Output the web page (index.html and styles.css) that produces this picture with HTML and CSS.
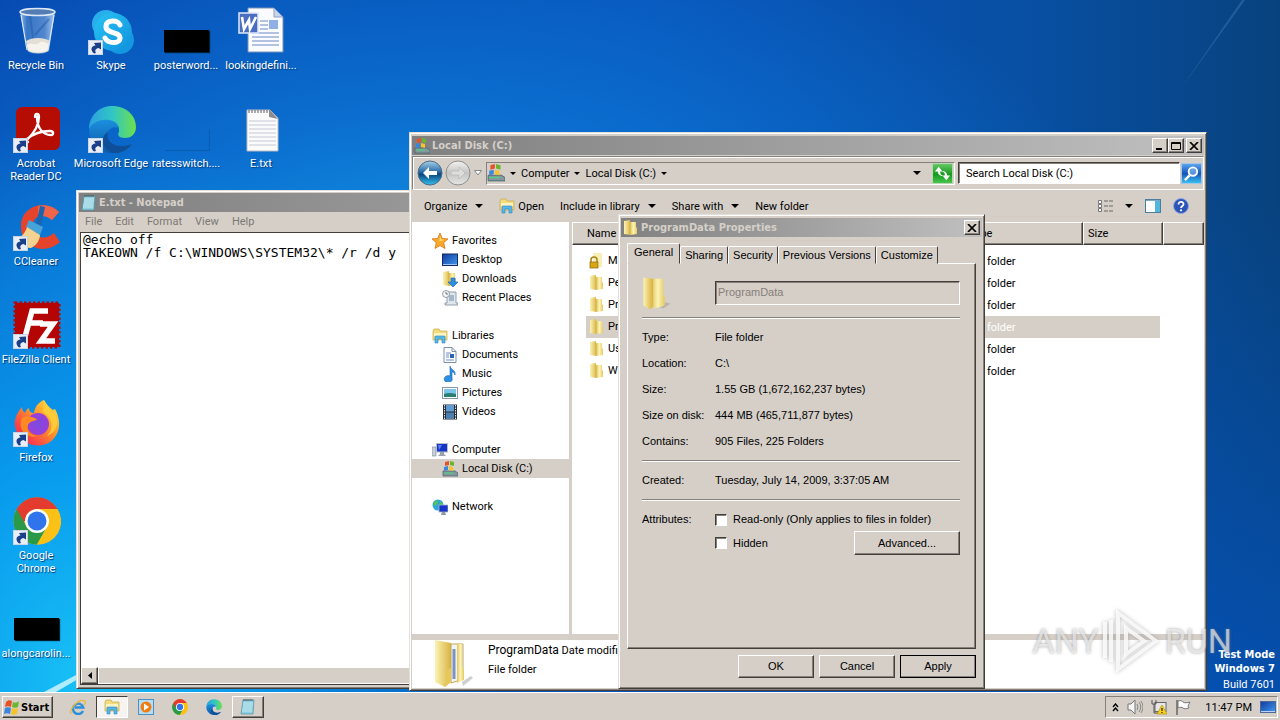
FILE: index.html
```html
<!DOCTYPE html>
<html lang="en">
<head>
<meta charset="utf-8">
<title>Desktop</title>
<link rel="stylesheet" href="styles.css">
</head>
<body>
<svg class="defs" aria-hidden="true">
  <defs>
    <linearGradient id="g-fold" x1="0" x2="1"><stop offset="0" stop-color="#fbf3b4"/><stop offset="1" stop-color="#d9b340"/></linearGradient>
    <linearGradient id="g-fold2" x1="0" x2="1"><stop offset="0" stop-color="#e3c356"/><stop offset=".5" stop-color="#fbf4b8"/><stop offset="1" stop-color="#e6c95c"/></linearGradient>
    <linearGradient id="g-edge" x1="0" x2="1"><stop offset="0" stop-color="#2a9fe0"/><stop offset=".5" stop-color="#31c6c4"/><stop offset="1" stop-color="#6de04a"/></linearGradient>
    <linearGradient id="g-edge2" x1="0" x2="0" y1="0" y2="1"><stop offset="0" stop-color="#1b8fdf"/><stop offset="1" stop-color="#0c59a4"/></linearGradient>
    <linearGradient id="g-sky" x1="0" y1="0" x2="1" y2="1"><stop offset="0" stop-color="#28c4f4"/><stop offset="1" stop-color="#1090dc"/></linearGradient>
    <linearGradient id="g-fox" x1="1" y1="0" x2="0" y2="1"><stop offset="0" stop-color="#fff04a"/><stop offset=".4" stop-color="#ff9a28"/><stop offset=".75" stop-color="#fb4348"/><stop offset="1" stop-color="#e0207c"/></linearGradient>
    <radialGradient id="g-purple"><stop offset="0" stop-color="#7a4be0"/><stop offset="1" stop-color="#9a3fd8"/></radialGradient>
    <linearGradient id="g-bin" x1="0" x2="1"><stop offset="0" stop-color="#b9d0ee"/><stop offset=".2" stop-color="#3f7cc8"/><stop offset=".7" stop-color="#5d90d2"/><stop offset="1" stop-color="#c7daf2"/></linearGradient>
    <linearGradient id="g-back" x1="0" x2="0" y1="0" y2="1"><stop offset="0" stop-color="#a8cfe8"/><stop offset=".45" stop-color="#2a6ea8"/><stop offset=".55" stop-color="#0a4780"/><stop offset="1" stop-color="#35c0ee"/></linearGradient>
    <linearGradient id="g-fwd" x1="0" x2="0" y1="0" y2="1"><stop offset="0" stop-color="#f2f2f0"/><stop offset=".5" stop-color="#c4c4c2"/><stop offset="1" stop-color="#e6e6e4"/></linearGradient>
    <linearGradient id="g-screen" x1="0" y1="0" x2="1" y2="1"><stop offset="0" stop-color="#123a9c"/><stop offset="1" stop-color="#3f9af0"/></linearGradient>
  </defs>

  <symbol id="i-shortcut" viewBox="0 0 15 15"><rect x=".5" y=".5" width="14" height="14" fill="#e9eef6" stroke="#c9d4e6"/><path d="M6 13.500C2 10 3 6 7.500 5.500L6 3l7-.5V9.500L10.500 8C7.500 8.500 6.500 10.500 8 13z" fill="#1b4089"/></symbol>

  <symbol id="i-bin" viewBox="0 0 48 48"><path d="M7 4h35l-6 40c-5 4-17 4-22 0z" fill="url(#g-bin)" opacity=".85"/><path d="M13 34c6-4 18-4 24 0l-2 10c-5 3-15 3-20 0z" fill="#e3dfd6"/><path d="M14 38c5-3 9 1 12-2s7 0 10 1l-1 6c-5 3-15 3-20 0z" fill="#f6f3ec"/><path d="M17 9l3 22M36 12L22 28" stroke="#215ba8" stroke-width="2" fill="none" opacity=".5"/><ellipse cx="24.500" cy="5" rx="17.500" ry="3.500" fill="#547db3" stroke="#dce8f6" stroke-width="1.500"/><path d="M8 8l6 35M41 8l-6 35" stroke="#d8e7f8" stroke-width="1.200"/></symbol>

  <symbol id="i-skype" viewBox="0 0 48 48"><circle cx="18" cy="17" r="14" fill="#28aeea"/><circle cx="32" cy="33" r="14" fill="#1496e0"/><circle cx="25" cy="25" r="19" fill="url(#g-sky)"/><path d="M32 18c-2-5-13-6-14 1-1 8 14 5 14 12 0 6-12 6-15 0" fill="none" stroke="#fff" stroke-width="5" stroke-linecap="round"/></symbol>

  <symbol id="i-word" viewBox="0 0 48 48"><path d="M10 1h26l9 9v35H10z" fill="#fafcff" stroke="#7b91b8"/><path d="M36 1v9h9z" fill="#c7d5ec" stroke="#8ba0c5"/><path d="M14 30h27M14 34h27M14 38h27M22 14h8M22 18h8M22 22h8M14 26h27" stroke="#6c87c4" stroke-width="1.200"/><rect x="31" y="13" width="9" height="9" fill="#8fb0e6"/><rect x="1" y="6" width="19" height="20" fill="#4a6fc0" stroke="#dfe8fa" stroke-width="1.500"/><path d="M4 10l2 12 5-9 1 9 6-12" fill="none" stroke="#fff" stroke-width="2.600"/></symbol>

  <symbol id="i-text" viewBox="0 0 48 48"><path d="M9 5h23l8 8v33H9z" fill="#fbfbfb" stroke="#b8bcc4"/><path d="M31 4l9 10-9-2z" fill="#8c8c8c"/><path d="M11 16h27M11 20h27M11 24h27M11 28h27M11 32h27M11 36h27M11 40h27" stroke="#c3c8d4"/><path d="M11 5v3M14 5v3M17 5v3M20 5v3M23 5v3M26 5v3M29 5v3" stroke="#777" stroke-width="1.200"/></symbol>

  <symbol id="i-acro" viewBox="0 0 48 48"><rect x="3" y="2" width="44" height="43" rx="6" fill="#b50d04"/><path d="M22 12c0-4 4-4 4 0 0 9-7 18-12 23M24 12c0 11 6 18 14 18 3 0 3-4-1-4-9 0-17 3-23 8-3 3-2 5 1 3" fill="none" stroke="#fff" stroke-width="2.300" stroke-linecap="round"/></symbol>

  <symbol id="i-edge" viewBox="0 0 48 48"><path d="M1 24C1 11 11 1 24 1c15 0 24 10 24 21 0 8-6 11-11 11-6 0-8-3-6-6C33 16 16 10 1 24z" fill="url(#g-edge)"/><path d="M1 24c5-11 27-13 30-1-7-3-13 3-12 9 1 9 14 14 27 6C40 46 32 49 24 48 10 47 1 36 1 24z" fill="url(#g-edge2)"/><path d="M20 27c-3 10 8 18 24 12-5 6-11 9-19 9-12-4-13-17-5-21z" fill="#0f4f98"/></symbol>

  <symbol id="i-cc" viewBox="0 0 48 48"><path d="M46 9C32-4 9 3 8 22c-1 21 22 32 39 17l-6-9c-9 8-21 5-21-7 0-11 11-14 19-6z" fill="#e5432c"/><path d="M46 9l-7 8c-5-4-10-5-14-2V3c8-2 15 0 21 6z" fill="#f0654a"/><path d="M27 3l5 1-4 19-5-1z" fill="#1c64ac"/><path d="M16 17l14 7-3 8-14-8z" fill="#45a3da"/><path d="M14 24l13 8c0 5-4 11-9 13C9 45 3 41 1 37c6-2 11-6 13-13z" fill="#f4d28f"/></symbol>

  <symbol id="i-fz" viewBox="0 0 48 48"><rect x="2" y="2" width="44" height="44" fill="#b40404" stroke="#b40404" stroke-width="3" stroke-dasharray="2.500 2"/><path d="M12 36L19 10h16M16 22h14M27 23h13L28 40h14" fill="none" stroke="#fff" stroke-width="5.500"/></symbol>

  <symbol id="i-fox" viewBox="0 0 48 48"><path d="M31 1c2 4 6 8 9 10l2-1c5 9 6 20 0 28-8 12-28 11-36-1C-1 27 1 17 9 8c0 3 1 4 3 6 1-3 2-4 4-5 0 3 2 5 5 5 1-7 5-11 10-13z" fill="url(#g-fox)"/><circle cx="25" cy="25" r="11" fill="url(#g-purple)"/><path d="M9 19c6-3 10-1 15 1-2 3-7 1-9 6-2 6 3 10 9 11-9 3-20-5-15-18z" fill="#ff8a24"/><path d="M30 13c10 5 11 17 4 24 9-3 13-13 8-22-4-3-8-8-11-14z" fill="#ffd13c" opacity=".8"/></symbol>

  <symbol id="i-chrome" viewBox="0 0 48 48"><circle cx="24" cy="24" r="23.500" fill="#fbc116"/><path d="M24 24H4L3.700 12A23.500 23.500 0 0 1 44.400 12H24z" fill="#e33b2e"/><path d="M3.700 12A23.500 23.500 0 0 0 24 47.500L34 30 14 30z" fill="#2a9a48"/><path d="M24 12h20.400A23 23 0 0 1 24 47.500L34 30z" fill="#fbc116"/><circle cx="24" cy="24" r="12" fill="#fff"/><circle cx="24" cy="24" r="9.500" fill="#2f74ea"/></symbol>

  <symbol id="i-flag" viewBox="0 0 16 16"><path d="M2 3c2-2 4-2 6-1L7 8C5 7 3 7 1 8z" fill="#e8502a"/><path d="M9 3c2 1 4 1 6-1l-1 6c-2 1-4 1-6 0z" fill="#6bb62f"/><path d="M1 9c2-1 4-1 6 0l-1 6c-2-1-4-1-6 0z" fill="#3a86dc"/><path d="M8 9c2 1 4 1 6 0l-1 6c-2 1-4 1-6 0z" fill="#f7c32b"/></symbol>

  <symbol id="i-disk" viewBox="0 0 16 16"><path d="M1 10h12l3 2v3H1z" fill="#8399a0" stroke="#4f646b" stroke-width=".8"/><path d="M2 12h9" stroke="#47d878"/><path d="M3 1l4-1v4l-4 1z" fill="#e8502a"/><path d="M8 0l4 1v4L8 4z" fill="#6bb62f"/><path d="M2 6l4-1v4L2 10z" fill="#3a86dc"/><path d="M7 5l4 1v4L7 9z" fill="#f7c32b"/></symbol>

  <symbol id="i-folder" viewBox="0 0 16 16"><path d="M1 1l6-1 1 15-7-1z" fill="url(#g-fold)"/><path d="M7 2h6v5l1 1v6l-7 1z" fill="url(#g-fold2)"/><path d="M7 2v13" stroke="#caa33a" stroke-width=".6"/></symbol>

  <symbol id="i-lockfolder" viewBox="0 0 16 16"><path d="M4 0h9v14H4z" fill="#f7efb9"/><path d="M2 9V7a3 3 0 0 1 6 0v2" fill="none" stroke="#a88417" stroke-width="1.500"/><rect x="1" y="9" width="8" height="6" fill="#d9a514" stroke="#8a6710" stroke-width=".7"/></symbol>

  <symbol id="i-bigfolder" viewBox="0 0 48 48"><path d="M25 44l9-7 6 2-10 7z" fill="#999" opacity=".5"/><path d="M2 2l13 2v40l-4 3-9-5z" fill="url(#g-fold)"/><path d="M15 4h15v22l2 4v12l-15 4-4-8z" fill="url(#g-fold2)"/><path d="M15 4v38" stroke="#d0aa3e"/></symbol>

  <symbol id="i-fullfolder" viewBox="0 0 48 48"><path d="M30 42l9-6 2 2-10 8z" fill="#888" opacity=".4"/><path d="M3 0l16 3v39l-6 5-10-5z" fill="url(#g-fold)"/><path d="M19 4h12v35l-12 4z" fill="#f0f3f8" stroke="#c2a85b"/><path d="M22 9v30" stroke="#7a93c4" stroke-width="3"/><path d="M25 4h5v22l2 3v11l-7 3z" fill="url(#g-fold2)"/><path d="M12 47l3-17 4-2v14z" fill="#e6c75a"/></symbol>

  <symbol id="i-lib" viewBox="0 0 16 16"><path d="M1 3l1-2h5l1 2h7v9H1z" fill="#f3dc7e" stroke="#c9a646" stroke-width=".7"/><path d="M2 5h12v3H2z" fill="#fbf4c0"/><path d="M3 15V9q0-1 1-1h8q1 0 1 1v6h-3v-4H6v4z" fill="#57b6e8" stroke="#2c86bd" stroke-width=".6"/></symbol>

  <symbol id="i-star" viewBox="0 0 16 16"><path d="M8 0l2.300 5.400 5.700.5-4.300 3.800L13 15.500l-5-3-5 3 1.300-5.800L0 5.900l5.700-.5z" fill="#f9a928" stroke="#d9731a" stroke-width=".8"/><path d="M8 3l1.400 3.500 3 .4-5 1z" fill="#ffe08a"/></symbol>
  <symbol id="i-desk" viewBox="0 0 16 16"><rect x=".5" y="2" width="15" height="11.500" fill="url(#g-screen)" stroke="#102a66"/><path d="M1 12.500h14" stroke="#9fc4f0"/></symbol>
  <symbol id="i-down" viewBox="0 0 16 16"><use href="#i-folder"/><path d="M9 7h4v4h3l-5 5-5-5h3z" fill="#2c8fe6" stroke="#1462ae" stroke-width=".6"/></symbol>
  <symbol id="i-recent" viewBox="0 0 16 16"><path d="M5 2h9v11h2v2H3v-2h2z" fill="#dfe6ec" stroke="#7c8b98" stroke-width=".8"/><path d="M7 6h5M7 8h5M7 10h5" stroke="#6e87a6"/><circle cx="4" cy="4" r="3.500" fill="#f3f5f7" stroke="#7c8b98" stroke-width=".8"/><path d="M4 2v2h2" stroke="#555" fill="none" stroke-width=".8"/></symbol>
  <symbol id="i-doc" viewBox="0 0 16 16"><path d="M2 .5h8l4 4v11H2z" fill="#fff" stroke="#7d8fa8"/><path d="M10 .5v4h4" fill="none" stroke="#7d8fa8"/><path d="M4 6h5M4 8h3M4 10h3M4 13h8" stroke="#6b8fcc"/><rect x="8" y="7" width="4" height="4" fill="#2c64b4"/></symbol>
  <symbol id="i-music" viewBox="0 0 16 16"><path d="M8 0c1 4 6 4 5 9-1-3-2-3-3-3v6a4 3.500 0 1 1-2-2z" fill="#2f8fe4" stroke="#1766b0" stroke-width=".6"/></symbol>
  <symbol id="i-pic" viewBox="0 0 16 16"><rect x=".5" y="2.500" width="15" height="11" fill="#fff" stroke="#8a97a5"/><rect x="2" y="4" width="12" height="8" fill="#7cc3ee"/><path d="M2 9q5-2 12 0v3H2z" fill="#2a7f72"/></symbol>
  <symbol id="i-vid" viewBox="0 0 16 16"><rect x="1" y=".5" width="14" height="15" fill="#2a2f36"/><path d="M2.500 1v14M13.500 1v14" stroke="#dfe5ea" stroke-dasharray="1.500 1"/><rect x="4" y="1" width="8" height="6.500" fill="#5f9cd4"/><rect x="4" y="8.500" width="8" height="6.500" fill="#4c7fae"/></symbol>
  <symbol id="i-comp" viewBox="0 0 16 16"><path d="M0 5h4v9H0z" fill="#c8ced8" stroke="#7b8695" stroke-width=".6"/><rect x="4.500" y="1.500" width="11" height="8.500" fill="#1734c8" stroke="#b8c0cc"/><path d="M6 3l4 0-3 5z" fill="#5b86f0"/><path d="M8 10h4v2l2 2H6l2-2z" fill="#9aa2ad"/></symbol>
  <symbol id="i-net" viewBox="0 0 16 16"><circle cx="6" cy="6" r="5.500" fill="#2fa6d8"/><path d="M2 3c4-3 5 0 3 2S1 8 2 3zM8 2l3 3-3 2z" fill="#56c452"/><rect x="7" y="6" width="9" height="7" fill="#1734c8" stroke="#a9b4c4" stroke-width=".8"/><path d="M10 13h3l1 3H9z" fill="#8e98a6"/></symbol>
  <symbol id="i-note" viewBox="0 0 16 16"><path d="M3 1h11l-1 14H1z" fill="#8fd0e0" stroke="#4d8ea2" stroke-width=".7"/><path d="M3 4h10M3 6h10M3 8h9M2 10h10M2 12h10" stroke="#d3eef4" stroke-width=".8"/><path d="M4 0v2M6 0v2M8 0v2M10 0v2M12 0v2" stroke="#4a5256" stroke-width=".9"/></symbol>
  <symbol id="i-ie" viewBox="0 0 16 16"><path d="M13 12a5.200 5.200 0 1 1 .3-3.500H5" fill="none" stroke="#2c8fdc" stroke-width="2.400"/><path d="M1 15C-1 10 9-1 15 2c1 1 0 3-1 4" fill="none" stroke="#e9b93a" stroke-width="1.300"/></symbol>
  <symbol id="i-wmp" viewBox="0 0 16 16"><rect x=".5" y=".5" width="15" height="15" fill="#b7dcf6" stroke="#4d90c8"/><circle cx="8" cy="8" r="5.500" fill="#f07d12"/><path d="M6 4.500l5 3.500-5 3.500z" fill="#fff"/></symbol>
  <symbol id="i-views" viewBox="0 0 16 16"><path d="M1.500 2.500h3v3h-3zM1.500 6.500h3v3h-3zM1.500 10.500h3v3h-3z" fill="#fff" stroke="#777"/><path d="M7 3h4M12 3h4M7 8h4M12 8h4M7 13h4M12 13h4" stroke="#666"/></symbol>
  <symbol id="i-pane" viewBox="0 0 16 16"><rect x=".5" y="1.500" width="15" height="13" fill="#fff" stroke="#4d7ea0"/><path d="M1 2.500h14" stroke="#7fa8c4"/><rect x="10" y="3" width="5" height="11" fill="#4fb8dc"/></symbol>
  <symbol id="i-help" viewBox="0 0 16 16"><circle cx="8" cy="8" r="7.500" fill="#2c55b8" stroke="#8fa8dc"/><path d="M5.500 6.500c0-4 5.500-3 5 0C10.300 8 8 8 8 10" fill="none" stroke="#fff" stroke-width="1.800"/><circle cx="8" cy="12.300" r="1.100" fill="#fff"/></symbol>
  <symbol id="i-caret" viewBox="0 0 8 4"><path d="M0 0h8L4 4z" fill="currentColor"/></symbol>
  <symbol id="i-x" viewBox="0 0 10 8"><path d="M1 0l8 8M9 0L1 8" stroke="#000" stroke-width="1.700"/></symbol>
</svg>

<div class="screen">
  <main class="desktop">
    <svg class="beams" viewBox="0 0 1280 692" preserveAspectRatio="none" aria-hidden="true">
      <path d="M44 692L78 674v5L56 692z" fill="#d8f8ff" opacity=".8"/>
      <path d="M1245 0L1180 90 1242 0z" fill="#6fa8e0" opacity=".25"/>
    </svg>

    <div class="icons">
      <div class="icon-col">
        <div class="shortcut"><svg class="pic"><use href="#i-bin"/></svg><span>Recycle Bin</span></div>
        <div class="shortcut"><svg class="pic"><use href="#i-acro"/></svg><svg class="arrow"><use href="#i-shortcut"/></svg><span>Acrobat<br>Reader DC</span></div>
        <div class="shortcut"><svg class="pic"><use href="#i-cc"/></svg><svg class="arrow"><use href="#i-shortcut"/></svg><span>CCleaner</span></div>
        <div class="shortcut"><svg class="pic"><use href="#i-fz"/></svg><svg class="arrow"><use href="#i-shortcut"/></svg><span>FileZilla Client</span></div>
        <div class="shortcut"><svg class="pic"><use href="#i-fox"/></svg><svg class="arrow"><use href="#i-shortcut"/></svg><span>Firefox</span></div>
        <div class="shortcut"><svg class="pic"><use href="#i-chrome"/></svg><svg class="arrow"><use href="#i-shortcut"/></svg><span>Google<br>Chrome</span></div>
        <div class="shortcut"><div class="thumb"></div><span>alongcarolin...</span></div>
      </div>
      <div class="icon-col">
        <div class="shortcut"><svg class="pic"><use href="#i-skype"/></svg><svg class="arrow"><use href="#i-shortcut"/></svg><span>Skype</span></div>
        <div class="shortcut"><svg class="pic"><use href="#i-edge"/></svg><svg class="arrow"><use href="#i-shortcut"/></svg><span>Microsoft Edge</span></div>
      </div>
      <div class="icon-col">
        <div class="shortcut"><div class="thumb"></div><span>posterword...</span></div>
        <div class="shortcut"><div class="thumb thumb-clear"></div><span>ratesswitch....</span></div>
      </div>
      <div class="icon-col">
        <div class="shortcut"><svg class="pic"><use href="#i-word"/></svg><span>lookingdefini...</span></div>
        <div class="shortcut"><svg class="pic"><use href="#i-text"/></svg><span>E.txt</span></div>
      </div>
    </div>

    <div class="build"><strong>Test Mode</strong><strong>Windows 7</strong><span>Build 7601</span></div>

    <section class="window notepad" aria-label="E.txt - Notepad">
      <header class="title"><svg class="ico"><use href="#i-note"/></svg><h2>E.txt - Notepad</h2></header>
      <nav class="menu"><button>File</button><button>Edit</button><button>Format</button><button>View</button><button>Help</button></nav>
      <div class="editor">
        <textarea aria-label="Text" spellcheck="false" wrap="off">@echo off
TAKEOWN /f C:\WINDOWS\SYSTEM32\* /r /d y</textarea>
        <div class="hscroll"><button aria-label="Scroll left"><svg viewBox="0 0 4 7"><path d="M4 0v7L0 3.500z"/></svg></button><div class="thumb-bar"></div></div>
      </div>
    </section>

    <section class="window explorer" aria-label="Local Disk (C:)">
      <header class="title"><svg class="ico"><use href="#i-disk"/></svg><h2>Local Disk (C:)</h2>
        <div class="caption">
          <button aria-label="Minimize"><svg viewBox="0 0 10 8"><path d="M1 7h6" stroke="#000" stroke-width="2"/></svg></button>
          <button aria-label="Maximize"><svg viewBox="0 0 10 8"><path d="M.5.500h9v7h-9zM1 1.500h8" fill="none" stroke="#000"/></svg></button>
          <button class="close" aria-label="Close"><svg><use href="#i-x"/></svg></button>
        </div>
      </header>
      <div class="address">
        <button class="round" aria-label="Back"><svg viewBox="0 0 26 26"><circle cx="13" cy="13" r="12" fill="url(#g-back)" stroke="#4c6a86"/><path d="M6 13l6-6v4h8v4h-8v4z" fill="#fff"/></svg></button>
        <button class="round" aria-label="Forward"><svg viewBox="0 0 26 26"><circle cx="13" cy="13" r="12" fill="url(#g-fwd)" stroke="#8e8e8c"/><path d="M20 13l-6-6v4H6v4h8v4z" fill="#dededc" stroke="#b8b8b6" stroke-width=".7"/></svg></button>
        <button class="recent" aria-label="Recent pages"><svg viewBox="0 0 8 6"><path d="M.5.500h7L4 5z" fill="#fff" stroke="#888"/></svg></button>
        <div class="crumbs">
          <svg class="disk"><use href="#i-disk"/></svg>
          <svg class="caret"><use href="#i-caret"/></svg><button>Computer</button>
          <svg class="caret"><use href="#i-caret"/></svg><button>Local Disk (C:)</button>
          <svg class="caret"><use href="#i-caret"/></svg>
          <svg class="caret big end"><use href="#i-caret"/></svg>
          <button class="refresh" aria-label="Refresh"><svg viewBox="0 0 20 20"><path d="M2 8l4-5 4 5H7.500q0 4 4 5-6 0-6.500-5zM18 12l-4 5-4-5h2.500q0-4-4-5 6 0 6.500 5z" fill="#fff"/></svg></button>
        </div>
        <input class="search" type="text" aria-label="Search" value="Search Local Disk (C:)">
        <button class="go" aria-label="Search"><svg viewBox="0 0 20 20"><circle cx="11.500" cy="8" r="4.500" fill="#9cd0ff" fill-opacity=".5" stroke="#fff" stroke-width="2"/><path d="M8 12l-5 5" stroke="#fff" stroke-width="2.500"/></svg></button>
      </div>
      <div class="toolbar">
        <button>Organize <svg class="caret big"><use href="#i-caret"/></svg></button>
        <button class="open"><svg class="ico"><use href="#i-lib"/></svg>Open</button>
        <button>Include in library <svg class="caret big"><use href="#i-caret"/></svg></button>
        <button>Share with <svg class="caret big"><use href="#i-caret"/></svg></button>
        <button>New folder</button>
        <div class="tools">
          <button aria-label="Change view"><svg class="ico"><use href="#i-views"/></svg></button>
          <button aria-label="View options"><svg class="caret big"><use href="#i-caret"/></svg></button>
          <button aria-label="Preview pane"><svg class="ico"><use href="#i-pane"/></svg></button>
          <button aria-label="Help"><svg class="ico"><use href="#i-help"/></svg></button>
        </div>
      </div>
      <div class="body">
        <nav class="tree">
          <ul>
            <li><svg class="ico"><use href="#i-star"/></svg>Favorites</li>
            <li class="sub"><svg class="ico"><use href="#i-desk"/></svg>Desktop</li>
            <li class="sub"><svg class="ico"><use href="#i-down"/></svg>Downloads</li>
            <li class="sub"><svg class="ico"><use href="#i-recent"/></svg>Recent Places</li>
          </ul>
          <ul>
            <li><svg class="ico"><use href="#i-lib"/></svg>Libraries</li>
            <li class="sub"><svg class="ico"><use href="#i-doc"/></svg>Documents</li>
            <li class="sub"><svg class="ico"><use href="#i-music"/></svg>Music</li>
            <li class="sub"><svg class="ico"><use href="#i-pic"/></svg>Pictures</li>
            <li class="sub"><svg class="ico"><use href="#i-vid"/></svg>Videos</li>
          </ul>
          <ul>
            <li><svg class="ico"><use href="#i-comp"/></svg>Computer</li>
            <li class="sub current"><svg class="ico"><use href="#i-disk"/></svg>Local Disk (C:)</li>
          </ul>
          <ul>
            <li><svg class="ico"><use href="#i-net"/></svg>Network</li>
          </ul>
        </nav>
        <div class="files">
          <table>
            <colgroup><col><col class="c-type"><col class="c-size"><col class="c-rest"></colgroup>
            <thead><tr><th>Name</th><th>Type</th><th>Size</th><th></th></tr></thead>
            <tbody>
              <tr><td><svg class="ico"><use href="#i-lockfolder"/></svg>MSOCache</td><td>File folder</td><td></td><td></td></tr>
              <tr><td><svg class="ico"><use href="#i-folder"/></svg>PerfLogs</td><td>File folder</td><td></td><td></td></tr>
              <tr><td><svg class="ico"><use href="#i-folder"/></svg>Program Files</td><td>File folder</td><td></td><td></td></tr>
              <tr class="picked"><td><svg class="ico"><use href="#i-folder"/></svg>ProgramData</td><td>File folder</td><td></td><td></td></tr>
              <tr><td><svg class="ico"><use href="#i-folder"/></svg>Users</td><td>File folder</td><td></td><td></td></tr>
              <tr><td><svg class="ico"><use href="#i-folder"/></svg>Windows</td><td>File folder</td><td></td><td></td></tr>
            </tbody>
          </table>
        </div>
      </div>
      <footer class="details">
        <svg class="pic"><use href="#i-fullfolder"/></svg>
        <div><p><span class="name">ProgramData</span> Date modified:</p><p>File folder</p></div>
      </footer>
    </section>

    <section class="window dialog" role="dialog" aria-label="ProgramData Properties">
      <header class="title"><svg class="ico"><use href="#i-folder"/></svg><h2>ProgramData Properties</h2>
        <div class="caption"><button class="close" aria-label="Close"><svg><use href="#i-x"/></svg></button></div>
      </header>
      <div class="sheet">
        <div class="tabs" role="tablist">
          <button role="tab" aria-selected="true" class="on">General</button><button role="tab">Sharing</button><button role="tab">Security</button><button role="tab">Previous Versions</button><button role="tab">Customize</button>
        </div>
        <div class="panel">
          <div class="row head"><svg class="bigico"><use href="#i-bigfolder"/></svg><input type="text" aria-label="Name" value="ProgramData" disabled></div>
          <hr>
          <dl>
            <dt>Type:</dt><dd>File folder</dd>
            <dt>Location:</dt><dd>C:\</dd>
            <dt>Size:</dt><dd>1.55 GB (1,672,162,237 bytes)</dd>
            <dt>Size on disk:</dt><dd>444 MB (465,711,877 bytes)</dd>
            <dt>Contains:</dt><dd>905 Files, 225 Folders</dd>
          </dl>
          <hr>
          <dl><dt>Created:</dt><dd>Tuesday, July 14, 2009, 3:37:05 AM</dd></dl>
          <hr>
          <div class="row attrs">
            <span>Attributes:</span>
            <div class="checks">
              <div><input type="checkbox" id="ro"><label for="ro">Read-only (Only applies to files in folder)</label></div>
              <div><input type="checkbox" id="hid"><label for="hid">Hidden</label><button class="btn adv">Advanced...</button></div>
            </div>
          </div>
        </div>
        <div class="actions"><button class="btn">OK</button><button class="btn">Cancel</button><button class="btn default">Apply</button></div>
      </div>
    </section>

    <div class="watermark"><span>ANY</span><svg viewBox="0 0 60 66"><path d="M9 12v42M3 14v36M16 5l38 28-38 28zM24 20l18 13-18 13z" fill="none"/></svg><span>RUN</span></div>
  </main>

  <footer class="taskbar">
    <button class="start"><svg class="ico"><use href="#i-flag"/></svg>Start</button>
    <div class="tasks">
      <button aria-label="Internet Explorer"><svg><use href="#i-ie"/></svg></button>
      <button class="pressed" aria-label="Windows Explorer"><svg><use href="#i-lib"/></svg></button>
      <button aria-label="Media Player"><svg><use href="#i-wmp"/></svg></button>
      <button aria-label="Chrome"><svg><use href="#i-chrome"/></svg></button>
      <button aria-label="Edge"><svg><use href="#i-edge"/></svg></button>
      <button class="raised" aria-label="Notepad"><svg><use href="#i-note"/></svg></button>
    </div>
    <div class="tray">
      <button aria-label="Show hidden icons"><svg class="chev" viewBox="0 0 7 9"><path d="M1 4l2.500-3L6 4M1 8l2.500-3L6 8" fill="none" stroke="#000" stroke-width="1.400"/></svg></button>
      <svg class="ico" viewBox="0 0 16 16"><path d="M1 5h3l4-4v14l-4-4H1z" fill="#f6f6f6" stroke="#777"/><path d="M10 5q2 3 0 6M12 3q3.500 5 0 10M14 2q4 6 0 12" fill="none" stroke="#888"/></svg>
      <svg class="ico" viewBox="0 0 16 16"><rect x="4" y="3.500" width="11" height="9" fill="#e6e6e6" stroke="#666"/><path d="M1 1v4h4V1M3 5v9h5" fill="none" stroke="#555"/><path d="M11 6l5 9H6z" fill="#f8d21c" stroke="#b8920c" stroke-width=".7"/><path d="M11 9v3M11 13v1" stroke="#000"/></svg>
      <svg class="ico" viewBox="0 0 16 16"><path d="M2 1v15" stroke="#666" stroke-width="1.500"/><path d="M3 2c3-1 4 0 5 1s4 1 7 0l-2 4 1 2c-3 1-5 1-6 0S5 8 3 9z" fill="#fcfcfc" stroke="#777"/></svg>
      <time>11:47 PM</time>
      <svg class="ico" viewBox="0 0 16 16"><rect x=".5" y="2.500" width="15" height="11" fill="url(#g-screen)" stroke="#4d6a96"/><path d="M1 12.500h14" stroke="#bcd3f0"/></svg>
    </div>
  </footer>
</div>
</body>
</html>
```
FILE: styles.css
```css
:root {
  --face: #d5cfc8;
  --hi: #ffffff;
  --lo: #85807a;
  --dark: #433e3a;
  --ui: Roboto, "Noto Sans", sans-serif;
  --dlg: "Liberation Sans", Arial, sans-serif;
}
* { box-sizing: border-box; }
html, body { height: 100%; margin: 0; }
body { font: 11px/13px var(--ui); color: #000; overflow: hidden; }
button, input, textarea { font: inherit; color: inherit; margin: 0; }
button { background: none; border: 0; padding: 0; white-space: nowrap; }
h2, p, ul, dl, dd { margin: 0; padding: 0; list-style: none; }
svg { display: block; flex: none; }
.defs { position: absolute; width: 0; height: 0; }
.ico { width: 16px; height: 16px; }
.caret { width: 6px; height: 3px; }
.caret.big { width: 8px; height: 4px; }

.screen { display: flex; flex-direction: column; height: 100%; }
.desktop {
  position: relative; flex: 1; min-height: 0; overflow: hidden;
  background:
    radial-gradient(ellipse 420px 560px at 80px 680px, #18c0f6 0%, rgba(8,160,242,.9) 40%, rgba(10,130,226,0) 100%),
    radial-gradient(ellipse 700px 420px at 420px 300px, #129ae8 0%, rgba(12,118,214,.8) 45%, rgba(8,80,180,0) 100%),
    linear-gradient(to bottom, rgba(6,80,180,0) 30%, rgba(4,82,184,.8) 100%),
    linear-gradient(to right, #0646ae 0%, #0850b8 50%, #0850a4 80%, #08427e 100%);
}
.beams { position: absolute; inset: 0; width: 100%; height: 100%; }

.icons { display: flex; position: relative; }
.icon-col { width: 75px; flex: none; }
.shortcut {
  position: relative; height: 98px; padding: 7px 3px 0 0; display: flex; flex-direction: column; align-items: center;
  color: #fff; text-align: center; white-space: nowrap; text-shadow: 1px 1px 1px #003a78;
}
.shortcut .pic { width: 48px; height: 48px; margin: 0 0 4px 2px; }
.shortcut .arrow { position: absolute; left: 13px; top: 40px; width: 15px; height: 15px; }
.thumb { width: 45px; height: 22px; margin: 23px 0 7px; background: #000; box-shadow: 1px 1px 1px #023; }
.thumb-clear { background: none; box-shadow: 1px 1px 0 #0a5cae; }

.build {
  position: absolute; right: 5px; bottom: 1px; display: flex; flex-direction: column; align-items: flex-end; gap: 1px;
  color: #fff;
}
.build strong { font-family: "DejaVu Sans Condensed", sans-serif; }
.build span { margin-top: 2px; }

.window {
  position: absolute; display: flex; flex-direction: column; padding: 2px; background: var(--face);
  border: 1px solid; border-color: #e4dfd8 var(--dark) var(--dark) #e4dfd8;
  box-shadow: inset 1px 1px var(--hi), inset -1px -1px var(--lo);
}
.title {
  display: flex; align-items: center; gap: 2px; height: 19px; padding: 0 2px; flex: none; color: #d5cfc8;
  background: linear-gradient(to right, #808080, #c0c0c0);
}
.title h2 { font: bold 11px/13px "DejaVu Sans Condensed", sans-serif; flex: 1; }
.caption { display: flex; }
.caption button, .hscroll button, .btn, .start, .raised {
  background: var(--face); border: 1px solid; border-color: var(--hi) var(--dark) var(--dark) var(--hi);
  box-shadow: inset -1px -1px var(--lo);
}
.caption button { width: 16px; height: 15px; display: grid; place-items: center; }
.caption svg { width: 10px; height: 8px; }
.caption .close { margin-left: 2px; }

.notepad { left: 76px; top: 190px; right: 280px; bottom: 3px; }
.menu { display: flex; gap: 13px; height: 19px; padding: 0 6px; color: #7d7974; align-items: center; flex: none; }
.editor { flex: 1; display: flex; flex-direction: column; margin: 1px; border: 1px solid; border-color: var(--dark) var(--hi) var(--dark) var(--dark); }
.editor textarea {
  flex: 1; border: 0; padding: 0 2px; resize: none; outline: 0; overflow: hidden; background: #fff;
  font: 13px/13px "DejaVu Sans Mono", monospace;
}
.hscroll { display: flex; height: 17px; }
.hscroll button { width: 17px; display: grid; place-items: center; }
.hscroll svg { width: 4px; height: 7px; }
.thumb-bar { flex: 1; border: 1px solid var(--hi); background: var(--face); }

.explorer { left: 409px; top: 132px; right: 73px; bottom: 1px; }
.explorer .title, .dialog .title { margin: 1px 0 0; }
.address {
  display: flex; align-items: center; height: 34px; margin: 1px 0 0; padding: 0 1px 0 4px; flex: none;
  border: 1px solid; border-color: var(--lo) var(--hi) var(--hi) var(--lo); box-shadow: inset 1px 1px var(--hi);
}
.round, .round svg { width: 26px; height: 26px; }
.round + .round { margin-left: 2px; }
.recent { margin: 0 4px 0 3px; }
.recent svg { width: 8px; height: 6px; }
.crumbs {
  flex: 1; height: 23px; display: flex; align-items: center; gap: 5px; padding-left: 0;
  border: 1px solid; border-color: var(--lo) var(--hi) var(--hi) var(--lo);
}
.disk { width: 18px; height: 18px; }
.crumbs .end { margin-left: auto; }
.refresh, .go { width: 21px; height: 21px; border: 1px solid #b7d8b4; background: linear-gradient(#67c763, #159a1e 55%, #4ac44c); }
.refresh { margin: 0 1px 0 6px; }
.go { background: linear-gradient(#5aa5ec, #1555b8 50%, #38c0f0); border-color: #a8c4e8; }
.search {
  width: 222px; height: 22px; margin: 0 1px 0 3px; padding: 0 7px; background: #fff;
  border: 1px solid; border-color: var(--dark) var(--hi) var(--hi) var(--dark); box-shadow: inset 1px 1px var(--lo);
}
.toolbar { display: flex; align-items: center; height: 32px; padding: 0 12px; gap: 16px; flex: none; }
.toolbar button { display: flex; align-items: center; gap: 8px; }
.toolbar .open { gap: 3px; }
.tools { display: flex; align-items: center; gap: 12px; margin-left: auto; padding-right: 3px; }
.body { flex: 1; min-height: 0; display: flex; }
.tree { width: 157px; flex: none; padding: 9px 0 0; background: #fff; }
.tree ul { margin-bottom: 19px; }
.tree li { display: flex; align-items: center; gap: 4px; height: 19px; padding-left: 20px; }
.tree .sub { padding-left: 30px; }
.tree .current { background: var(--face); }
.files { flex: 1; min-width: 0; margin-left: 3px; background: #fff; }
.files table { width: 100%; table-layout: fixed; border-collapse: separate; border-spacing: 0; }
.c-type { width: 122px; }
.c-size { width: 80px; }
.c-rest { width: 41px; }
.files th {
  height: 23px; padding: 0 4px; font-weight: normal; text-align: left; background: var(--face);
  border: 1px solid; border-color: var(--hi) var(--dark) var(--dark) var(--hi); box-shadow: inset -1px -1px var(--lo);
}
.files th:first-child { padding-left: 14px; }
.files th:nth-child(2) { padding-left: 7px; }
.files td { height: 22px; padding: 0 6px; background-clip: padding-box; }
.files td:first-child { border-left: 14px solid transparent; padding-left: 3px; }
.files td:nth-child(3) { border-right: 3px solid transparent; }
.files td .ico { display: inline-block; vertical-align: middle; margin-right: 3px; }
.files tbody::before { content: ""; display: block; height: 5px; }
.picked td:not(:last-child) { background-color: var(--face); }
.picked td:nth-child(2) { color: #fff; }
.details { display: flex; height: 54px; flex: none; border-top: 6px solid var(--face); background: #fff; gap: 8px; padding-left: 20px; }
.details .pic { width: 48px; height: 48px; }
.details p { line-height: 18px; padding-top: 1px; }
.details .name { font-size: 12px; }

.dialog { left: 618px; top: 214px; width: 367px; font-family: var(--dlg); }
.sheet { padding: 6px 6px 8px; }
.tabs { display: flex; align-items: flex-end; margin-bottom: -1px; position: relative; }
.tabs button {
  height: 18px; padding: 0 4px; background: var(--face);
  border: 1px solid; border-color: var(--hi) var(--dark) transparent var(--hi); border-radius: 2px 2px 0 0;
}
.tabs .on { height: 21px; padding: 0 6px 3px; border-bottom-color: var(--face); }
.panel {
  min-height: 386px; padding: 11px 15px 0 14px;
  border: 1px solid; border-color: var(--hi) var(--dark) var(--dark) var(--hi); box-shadow: inset -1px -1px var(--lo);
}
.row { display: flex; }
.head { align-items: center; height: 36px; gap: 39px; }
.bigico { width: 34px; height: 34px; }
.head input {
  flex: 1; min-width: 0; height: 24px; padding: 0 2px 3px; background: var(--face); color: #85807a;
  border: 1px solid; border-color: var(--dark) var(--hi) var(--hi) var(--dark); box-shadow: inset 1px 1px var(--lo);
}
.panel hr { height: 2px; margin: 6px 0 5px; border: 0; border-top: 1px solid var(--lo); border-bottom: 1px solid var(--hi); }
.panel dl { display: grid; grid-template-columns: 73px 1fr; line-height: 26px; }
.attrs { padding-top: 7px; }
.attrs > span { width: 73px; flex: none; }
.checks { flex: 1; }
.checks > div { display: flex; align-items: center; gap: 6px; }
.checks > div + div { height: 24px; margin-top: 5px; }
.checks input {
  appearance: none; width: 12px; height: 12px; background: #fff;
  border: 1px solid; border-color: var(--dark) var(--hi) var(--hi) var(--dark); box-shadow: inset 1px 1px var(--lo);
}
.btn { width: 76px; height: 23px; text-align: center; }
.adv { width: 106px; margin-left: auto; height: 24px; }
.default { outline: 1px solid #000; outline-offset: -1px; border-color: #000; }
.actions { display: flex; justify-content: flex-end; gap: 5px; padding-top: 6px; }

.watermark {
  position: absolute; right: 48px; bottom: 18px; display: flex; align-items: center; gap: 3px; pointer-events: none;
  font: 34px/48px "Liberation Sans Narrow", Roboto, sans-serif; color: rgba(255,255,255,.6); text-shadow: 0 0 3px rgba(120,120,120,.7);
}
.watermark svg { width: 60px; height: 66px; stroke: rgba(255,255,255,.8); stroke-width: 4; filter: drop-shadow(0 0 2px rgba(120,120,120,.6)); }

.taskbar {
  display: flex; align-items: center; height: 28px; padding: 1px 2px 0; flex: none; background: var(--face);
  border-top: 1px solid var(--hi);
}
.start {
  display: flex; align-items: center; gap: 1px; height: 22px; padding: 0 3px 0 1px;
  font: bold 11px/13px "DejaVu Sans Condensed", sans-serif;
}
.tasks { display: flex; margin-left: 9px; gap: 2px; }
.tasks button { width: 32px; height: 22px; display: grid; place-items: center; border: 1px solid transparent; }
.tasks svg { width: 16px; height: 16px; }
.tasks .pressed { background: #f6f4f1; border-color: var(--dark) var(--hi) var(--hi) var(--dark); }
.tasks .raised { border-color: var(--hi) var(--dark) var(--dark) var(--hi); }
.tray {
  display: flex; align-items: center; gap: 8px; height: 22px; margin-left: auto; padding: 0 1px 0 6px;
  border: 1px solid; border-color: var(--lo) var(--hi) var(--hi) var(--lo);
}
.chev { width: 7px; height: 9px; }
.tray time { padding-left: 6px; }
```
